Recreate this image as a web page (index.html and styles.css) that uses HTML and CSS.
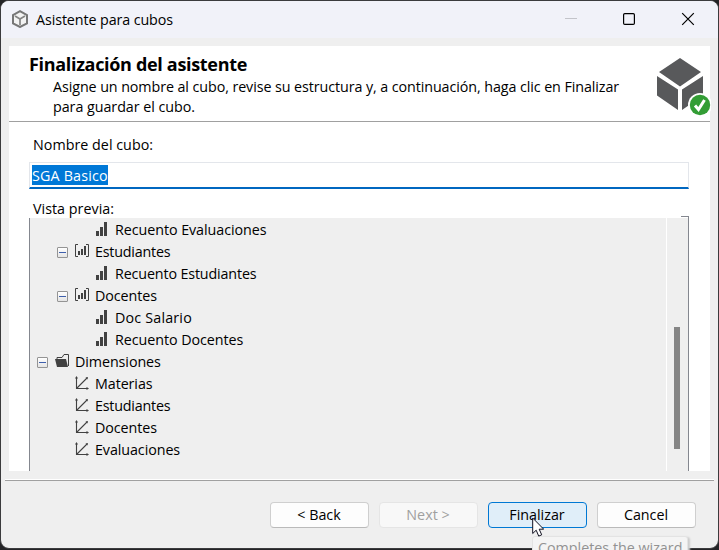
FILE: index.html
```html
<!DOCTYPE html>
<html lang="es">
<head>
<meta charset="utf-8">
<title>Asistente para cubos</title>
<link rel="stylesheet" href="styles.css">
</head>
<body>
<svg class="defs" width="0" height="0">
  <symbol id="bars" viewBox="0 0 14 14"><path fill="#414141" d="M1 9h3v5H1zM5 5h3v9H5zM9 0h3v14H9z"/></symbol>
  <symbol id="group" viewBox="0 0 14 14"><path fill="none" stroke="#414141" d="M3 .5H.5v12H3M11 .5h2.500v12H11"/><path fill="#414141" d="M3 7h2v4H3zM6 5h2v6H6zM9 2h2v9H9z"/></symbol>
  <symbol id="axes" viewBox="0 0 14 14"><path fill="none" stroke="#414141" stroke-width="1.100" d="M1.500 1v11.500H13M2 12l10-10"/><path fill="#414141" d="M0 2.500 1.500 0 3 2.500zM11.500 11l2.500 1.500-2.500 1.500zM10.500 1.500 13 1l-.5 2.500z"/></symbol>
  <symbol id="folder" viewBox="0 0 14 14"><path fill="none" stroke="#414141" d="M2 5V3.500h5l2-3h4.500V12"/><path fill="#414141" d="M0 5h11l2 8H2z"/></symbol>
</svg>
<div class="window">
  <header class="titlebar">
    <svg class="app-icon" viewBox="0 0 16 18"><path d="M8 1.200 15 5v8.500L8 17l-7-3.500V5z" fill="#f3f3f3" stroke="#777" stroke-width="2"/><path d="m3 6 5 3 5-3M8 9v6" fill="none" stroke="#858585" stroke-width="1.700"/></svg>
    <span class="caption">Asistente para cubos</span>
    <svg class="controls" viewBox="0 0 130 16"><path d="M0 7.500h12" stroke="#c3c4ca"/><rect x="58.600" y="2.600" width="10.800" height="10.800" rx="1.200" fill="none" stroke="#000" stroke-width="1.200"/><path d="m117.200 2.200 11.600 11.600m0-11.600-11.600 11.600" stroke="#000" stroke-width="1.200"/></svg>
  </header>
  <main class="page">
    <section class="intro">
      <div class="intro-text">
        <h1><span class="heading">Finalización del asistente</span></h1>
        <p><span class="line-a">Asigne un nombre al cubo, revise su estructura y, a continuación, haga clic en Finalizar</span><br><span class="line-b">para guardar el cubo.</span></p>
      </div>
      <svg class="cube" viewBox="0 0 54 60"><path fill="#58595b" d="m23 1 21 14-21 14.500L2 15zM0 19l21 13.500V53L0 38.500zM46 19v19.500L25 53V32.500z"/><circle cx="43" cy="48" r="12" fill="#fff"/><circle cx="43" cy="48" r="10.200" fill="#339d35"/><path d="m38 48.500 3.500 4L47.500 43" fill="none" stroke="#fff" stroke-width="3"/></svg>
    </section>
    <section class="form">
      <label class="name-label">Nombre del cubo:</label>
      <div class="field"><span class="selected">SGA Basico</span></div>
      <label class="preview-label">Vista previa:</label>
      <div class="tree">
        <div class="rows">
          <div class="row leaf"><svg><use href="#bars"/></svg><span class="t-re">Recuento Evaluaciones</span></div>
          <div class="row branch"><i class="toggle"></i><svg><use href="#group"/></svg><span class="t-e">Estudiantes</span></div>
          <div class="row leaf"><svg><use href="#bars"/></svg><span class="t-rs">Recuento Estudiantes</span></div>
          <div class="row branch"><i class="toggle"></i><svg><use href="#group"/></svg><span class="t-d">Docentes</span></div>
          <div class="row leaf"><svg><use href="#bars"/></svg><span class="t-s">Doc Salario</span></div>
          <div class="row leaf"><svg><use href="#bars"/></svg><span class="t-re">Recuento Docentes</span></div>
          <div class="row root"><i class="toggle"></i><svg><use href="#folder"/></svg><span class="t-di">Dimensiones</span></div>
          <div class="row dim"><svg><use href="#axes"/></svg><span class="t-di">Materias</span></div>
          <div class="row dim"><svg><use href="#axes"/></svg><span class="t-e">Estudiantes</span></div>
          <div class="row dim"><svg><use href="#axes"/></svg><span class="t-d">Docentes</span></div>
          <div class="row dim"><svg><use href="#axes"/></svg><span class="t-di">Evaluaciones</span></div>
        </div>
        <div class="scrollbar"><div class="thumb"></div></div>
      </div>
    </section>
  </main>
  <footer class="actions">
    <button>&lt; Back</button>
    <button disabled>Next &gt;</button>
    <button class="primary">Finalizar</button>
    <button>Cancel</button>
  </footer>
</div>
<div class="tooltip">Completes the wizard</div>
<svg class="cursor" viewBox="0 0 12 20"><path d="M.7 1v15.500l3.500-3.300 2.500 5.900 3-1.300-2.500-5.600h4.500z" fill="#fff" stroke="#101020"/></svg>
</body>
</html>
```
FILE: styles.css
```css
* { box-sizing: border-box; }
body {
  margin: 0; width: 719px; height: 550px; overflow: hidden; position: relative;
  background: #242426; padding: 1px 1px 1px 0;
  font: 14.3px/20px "Open Sans", "Noto Sans", sans-serif; color: #000;
}
.defs { position: absolute; }
.window {
  height: 549px; width: 719px; border: 1px solid #3b3b3d; border-radius: 9px;
  background: #efefef; overflow: hidden; margin-top: -1px;
  display: flex; flex-direction: column;
}
.titlebar { height: 37px; flex: none; background: #f1f2f9; display: flex; align-items: center; padding-left: 11px; }
.app-icon { width: 16px; height: 18px; margin: -2px 8px 0 0; }
.caption { letter-spacing: -.1px; }
.controls { width: 130px; height: 16px; margin: -2px 23px 0 auto; }
.page { margin: 8px 8px 0; height: 425px; background: #fff; }
.intro { height: 76px; display: flex; justify-content: space-between; border-bottom: 1px solid #a0a0a0; }
.intro-text { padding: 7px 0 0 20px; white-space: nowrap; }
h1 { margin: 0; font-size: 18px; line-height: 22px; font-weight: 700; letter-spacing: -.32px; }
p { margin: 2px 0 0 24px; }
.line-a { letter-spacing: -.083px; }
.line-b { letter-spacing: -.04px; }
.cube { width: 54px; height: 60px; margin: 11px -1px 0 0; flex: none; }
.form { padding: 13px 21px 0 20px; }
label { display: block; padding-left: 4px; height: 20px; letter-spacing: .02px; }
.field { height: 27px; margin-top: 7px; border: 1px solid #e3e6eb; border-bottom: 2px solid #0067c0; padding: 2px 2px; line-height: 20px; }
.selected { display: inline-block; height: 20px; line-height: 22px; background: #0078d7; color: #fff; letter-spacing: .18px; }
.preview-label { margin-top: 10px; }
.tree { position: relative; margin-top: -1px; height: 253px; background: #efefef; border: solid #84878f; border-width: 0 1px; display: flex; }
.tree::after { content: ""; position: absolute; right: -1px; top: -2px; width: 7px; height: 2px; border: solid #84878f; border-width: 1px 1px 0 0; }
.rows { flex: 1; padding-top: 1px; }
.row { height: 22px; display: flex; align-items: center; white-space: nowrap; }
.row svg { width: 14px; height: 14px; margin: -2px 6px 0 0; flex: none; }
.leaf { padding-left: 65px; }
.branch { padding-left: 27px; }
.root { padding-left: 7px; }
.dim { padding-left: 45px; }
.t-re { letter-spacing: -.06px; }
.t-rs { letter-spacing: -.14px; }
.t-e { letter-spacing: -.2px; }
.t-d, .t-di { letter-spacing: -.08px; }
.t-s { letter-spacing: .18px; }
.toggle { width: 11px; height: 11px; margin-right: 7px; border: 1px solid #949494; border-radius: 1px; background: linear-gradient(#3e5fac, #3e5fac) center / 7px 1px no-repeat, linear-gradient(#fff, #e4e4e4); }
.scrollbar { width: 22px; border-left: 1px solid #fff; padding: 109px 0 0 7px; }
.thumb { width: 6px; height: 122px; background: #858585; }
.actions { margin: 9px 4px 0 4px; border-top: 1px solid #a0a0a0; box-shadow: 0 -1px #fff; padding: 21px 18px 0 0; display: flex; justify-content: flex-end; gap: 10px; }
button { width: 99px; height: 26px; padding: 0 1px 1px 0; border: 1px solid #cfcfcf; border-bottom-color: #bababa; border-radius: 4px; background: #fdfdfd; font: inherit; color: #000; }
button:disabled { background: #f8f8f8; border-color: #e5e5e5; color: #a0a0a0; }
.primary { background: #e0eef9; border-color: #0078d4; }
.tooltip { position: absolute; left: 532px; top: 536px; width: 156px; height: 24px; border: 1px solid #e3e3e3; border-radius: 3px; background: #f4f4f4; box-shadow: 2px 1px 2px #ccc; color: #929292; padding-left: 5px; line-height: 22px; white-space: nowrap; }
.cursor { position: absolute; left: 532px; top: 517px; width: 12px; height: 20px; }
```
